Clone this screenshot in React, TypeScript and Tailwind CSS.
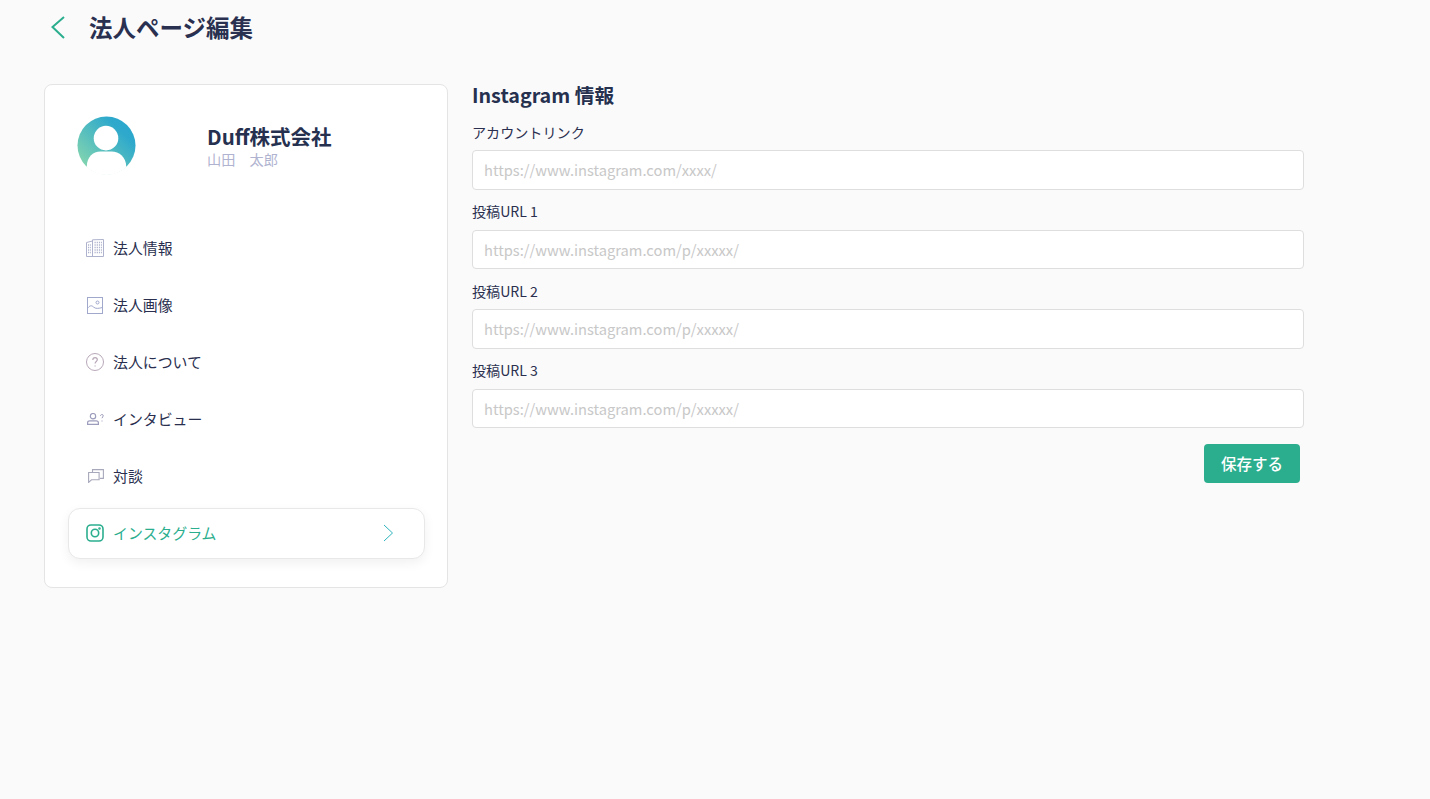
const font = { fontFamily: '"Noto Sans CJK JP", "Noto Sans", sans-serif' };

function BuildingIcon() {
	return (
		<svg width="18" height="18" viewBox="0 0 18 18" fill="none" stroke="#aeb2cc" strokeWidth="1">
			<path d="M.5 17.500V3.500l6-1.500v15.500M6.500 17.500V.8l11-.3v17H.5" />
			<path d="M2 6h3M2 8.500h3M2 11h3M2 13.500h3M8.500 3.500h7.500M8.500 6h7.500M8.500 8.500h7.500M8.500 11h7.500M8.500 13.500h7.500" strokeWidth="1.300" strokeDasharray="1.200 1" />
		</svg>
	);
}

function ImageIcon() {
	return (
		<svg width="16" height="17" viewBox="0 0 16 17" fill="none" stroke="#a0a8cc" strokeWidth="1">
			<rect x=".5" y=".5" width="15" height="16" />
			<circle cx="10.500" cy="5.500" r="1.500" />
			<path d="M.5 11.500c2-3 4-3.500 6-1.500s5 1.500 9 .5" />
		</svg>
	);
}

function QuestionIcon() {
	return (
		<svg width="18" height="18" viewBox="0 0 18 18" fill="none" stroke="#b8a8b8" strokeWidth="1">
			<circle cx="9" cy="9" r="8.500" />
			<path d="M6.800 7c0-1.400 1-2.300 2.300-2.300S11.300 5.600 11.300 6.800c0 1.700-2.200 1.800-2.200 3.800" strokeWidth="1.200" />
			<path d="M9.100 12.400v1.100" strokeWidth="1.200" />
		</svg>
	);
}

function InterviewIcon() {
	return (
		<svg width="17" height="12" viewBox="0 0 17 12" fill="none" stroke="#9c9cbc" strokeWidth="1.200">
			<circle cx="6" cy="3.200" r="2.700" />
			<path d="M.6 11.400V9.800c0-1.300 1-2 2.200-2h6.400c1.200 0 2.200.7 2.200 2v1.600z" />
			<path d="M13.400 3c.2-1 .8-1.500 1.500-1.500.8 0 1.400.5 1.400 1.300 0 1.100-1.300 1.200-1.300 2.400M15 7.500v1" strokeWidth="1" />
		</svg>
	);
}

function TalkIcon() {
	return (
		<svg width="16" height="14" viewBox="0 0 16 14" fill="none" stroke="#a8a8bc" strokeWidth="1.100">
			<path d="M4.500 4V.6h10.900v8.800H12" />
			<path d="M.6 3.500h10.500v7.300H3.500l-2.900 2.600z" />
		</svg>
	);
}

function InstagramIcon() {
	return (
		<svg width="18" height="18" viewBox="0 0 18 18" fill="none" stroke="#2bae8e" strokeWidth="1.600">
			<rect x="1" y="1" width="16" height="16" rx="4" />
			<circle cx="9" cy="9" r="3.700" />
			<circle cx="13.500" cy="4.500" r=".5" fill="#2bae8e" />
		</svg>
	);
}

function Avatar() {
	return (
		<svg width="59" height="59" viewBox="0 0 60 60">
			<defs>
				<linearGradient id="avatarBg" x1="0" y1="1" x2="1" y2="0">
					<stop offset="0.1" stopColor="#85d6ae" />
					<stop offset="0.75" stopColor="#2ea9cc" />
					<stop offset="1" stopColor="#2aa6cf" />
				</linearGradient>
				<clipPath id="avatarClip">
					<circle cx="30" cy="30" r="30" />
				</clipPath>
			</defs>
			<circle cx="30" cy="30" r="29.500" fill="url(#avatarBg)" />
			<g clipPath="url(#avatarClip)">
				<circle cx="29.500" cy="22.500" r="12.500" fill="#fff" />
				<path d="M10 60V51c0-9 6-15 14-15h11c8 0 15 6 15 15v9z" fill="#fff" />
			</g>
		</svg>
	);
}

const navItems = [
	{ label: "法人情報", Icon: BuildingIcon, pad: "pl-[18px]" },
	{ label: "法人画像", Icon: ImageIcon, pad: "pl-[19px]" },
	{ label: "法人について", Icon: QuestionIcon, pad: "pl-[18px]" },
	{ label: "インタビュー", Icon: InterviewIcon, pad: "pl-[19px]" },
	{ label: "対談", Icon: TalkIcon, pad: "pl-5" },
];

const fields = [
	{ label: "アカウントリンク", placeholder: "https://www.instagram.com/xxxx/" },
	{ label: "投稿URL 1", placeholder: "https://www.instagram.com/p/xxxxx/" },
	{ label: "投稿URL 2", placeholder: "https://www.instagram.com/p/xxxxx/" },
	{ label: "投稿URL 3", placeholder: "https://www.instagram.com/p/xxxxx/" },
];

export default function App() {
	return (
		<div className="min-h-[799px] bg-[#fafafa] text-[#2a2f4f]" style={font}>
			<header className="flex h-[84px] items-start pl-[50px] pt-[13px]">
				<svg width="16" height="24" viewBox="0 0 16 24" fill="none" stroke="#2bae8e" strokeWidth="2" className="mt-[2px]">
					<path d="M14 2 2.500 12 14 23" />
				</svg>
				<h1 className="mt-px ml-[23px] text-[23.500px] leading-[27px] font-bold text-[#2a3050]">法人ページ編集</h1>
			</header>
			<div className="flex items-start pl-11">
				<aside className="h-[504px] w-[404px] rounded-lg border border-[#e4e4e4] bg-white pt-[31px] pr-[22px] pl-[23px]">
					<div className="flex h-[107px] items-start pl-2">
						<span className="ml-px">
							<Avatar />
						</span>
						<div className="ml-[71px] pt-2">
							<p className="text-[20.500px] leading-6 font-bold text-[#26304f]">Duff株式会社</p>
							<p className="mt-[3px] text-[14.200px] leading-[16px] text-[#b0b3d0]">山田　太郎</p>
						</div>
					</div>
					<nav className="flex flex-col gap-[6px]">
						{navItems.map(({ label, Icon, pad }) => (
							<div key={label} className="flex h-[51px] items-center pb-px">
								<span className="flex w-[45px] items-center">
									<span className={pad}>
										<Icon />
									</span>
								</span>
								<span className="text-[14.900px]">{label}</span>
							</div>
						))}
						<div className="flex h-[51px] items-center justify-between rounded-xl border border-[#e8e8e8] bg-white pr-[30px] pb-px shadow-[0_4px_12px_rgba(0,0,0,0.06)]">
							<div className="flex items-center">
								<span className="flex w-[44px] items-center pl-[17px]">
									<InstagramIcon />
								</span>
								<span className="text-[14.900px] text-[#2bae8e]">インスタグラム</span>
							</div>
							<svg width="11" height="18" viewBox="0 0 11 18" fill="none" stroke="#2fb5bd" strokeWidth="1">
								<path d="M1 1l8.500 8L1 17" />
							</svg>
						</div>
					</nav>
				</aside>
				<main className="ml-6 w-[832px]">
					<h2 className="h-[36.500px] text-[19.700px] leading-[21px] font-bold text-[#26304f]">Instagram 情報</h2>
					<div className="flex flex-col">
						{fields.map((field) => (
							<div key={field.label}>
								<label className="block h-[29.500px] text-[14.100px] leading-[22px]">{field.label}</label>
								<input
									readOnly
									placeholder={field.placeholder}
									className="h-[39.500px] w-full rounded border border-[#dedede] bg-white px-[11px] text-[14.700px] outline-none placeholder:text-[#c8c8c8]"
								/>
								<div className="h-[10.500px]" />
							</div>
						))}
					</div>
					<div className="flex justify-end pt-[5.500px] pr-1">
						<button className="h-[39px] w-24 rounded bg-[#2bae8e] text-[15.500px] font-medium text-white">保存する</button>
					</div>
				</main>
			</div>
		</div>
	);
}
